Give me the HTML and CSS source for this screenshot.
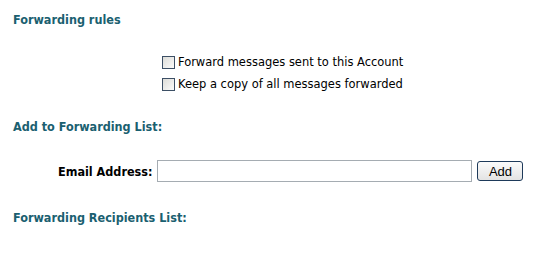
FILE: index.html
```html
<!DOCTYPE html>
<html>
<head>
<meta charset="utf-8">
<link rel="stylesheet" href="styles.css">
</head>
<body>
<div class="page">
  <h2 class="heading first">Forwarding rules</h2>
  <div class="options">
    <label class="opt"><span class="box"></span>Forward messages sent to this Account</label>
    <label class="opt"><span class="box"></span>Keep a copy of all messages forwarded</label>
  </div>
  <h2 class="heading">Add to Forwarding List:</h2>
  <div class="addrow">
    <span class="lbl">Email Address:</span>
    <span class="field"></span>
    <span class="btn">Add</span>
  </div>
  <h2 class="heading">Forwarding Recipients List:</h2>
</div>
</body>
</html>
```

FILE: styles.css
```css
html, body { margin: 0; padding: 0; background: #fff; }
.page {
  font-family: "DejaVu Sans Condensed", "DejaVu Sans", Verdana, sans-serif;
  font-size: 12.5px;
  color: #000;
  padding: 12px 0 0 13px;
}
.heading {
  margin: 0;
  font-size: 12.5px;
  font-weight: bold;
  color: #1a6070;
  line-height: 15px;
}
.options {
  display: flex;
  flex-direction: column;
  gap: 8px;
  padding: 28px 0 0 149px;
  font-size: 12.75px;
}
.opt { display: flex; align-items: center; gap: 3px; line-height: 14px; }
.box {
  width: 11px; height: 11px;
  border: 1px solid #3c4f65;
  background: linear-gradient(135deg, #dcdcd8, #fbfbfa);
}
.options + .heading { margin-top: 28px; }
.addrow {
  display: flex;
  align-items: center;
  padding: 26px 0 0 45px;
}
.lbl { font-weight: bold; margin-right: 5px; }
.field {
  width: 313px; height: 20px;
  border: 1px solid #a5acb2;
  background: #fff;
}
.btn {
  margin-left: 5px;
  width: 44px; height: 18px;
  border: 1px solid #1e3a5a;
  border-radius: 3px;
  background: linear-gradient(#fbfbfb, #e3e3e3);
  font-family: "Liberation Sans", Arial, sans-serif;
  font-size: 13px;
  display: flex; align-items: center; justify-content: center;
}
.addrow + .heading { margin-top: 28px; }
```
